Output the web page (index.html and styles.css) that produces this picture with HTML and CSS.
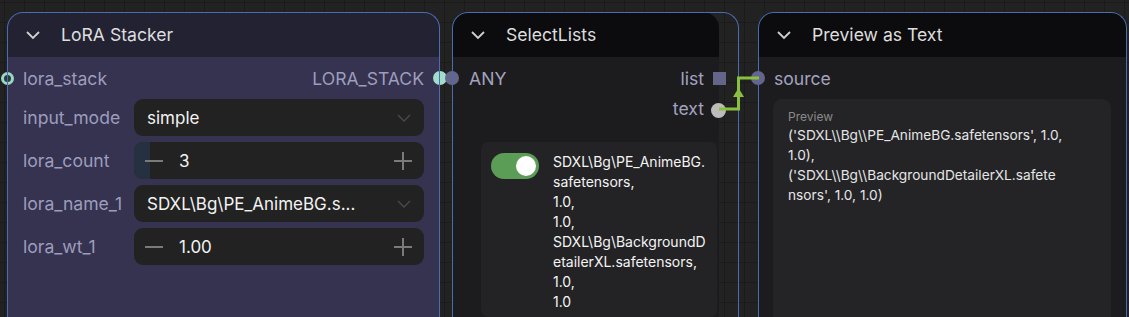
FILE: index.html
```html
<!DOCTYPE html>
<html lang="en">
<head>
<meta charset="UTF-8">
<meta name="viewport" content="width=device-width, initial-scale=1.0">
<title>Node Graph</title>
<link rel="stylesheet" href="styles.css">
</head>
<body>
<div class="canvas">

    <!-- LoRA Stacker -->
    <div class="node node-lora">
        <div class="node-header">
            <svg class="chevron" width="16" height="10" viewBox="0 0 16 10"><path d="M2 2 L8 8 L14 2" fill="none" stroke="#d0d0d0" stroke-width="1.8"/></svg>
            <span class="node-title">LoRA Stacker</span>
        </div>
        <div class="node-body">
            <div class="slot-row">
                <span class="slot-label">lora_stack</span>
                <span class="slot-label">LORA_STACK</span>
                <span class="dot dot-in dot-ring"></span>
                <span class="dot dot-out dot-teal"></span>
            </div>
            <div class="widgets">
                <span class="w-label">input_mode</span>
                <div class="widget">
                    <span class="w-value">simple</span>
                    <svg class="w-arrow" width="14" height="8" viewBox="0 0 14 8"><path d="M1 1 L7 7 L13 1" fill="none" stroke="#4a4a4a" stroke-width="1.4"/></svg>
                </div>

                <span class="w-label">lora_count</span>
                <div class="widget widget-num">
                    <span class="num-fill"></span>
                    <span class="minus"></span>
                    <span class="w-value">3</span>
                    <span class="plus"></span>
                </div>

                <span class="w-label">lora_name_1</span>
                <div class="widget">
                    <span class="w-value">SDXL\Bg\PE_AnimeBG.s...</span>
                    <svg class="w-arrow" width="14" height="8" viewBox="0 0 14 8"><path d="M1 1 L7 7 L13 1" fill="none" stroke="#4a4a4a" stroke-width="1.4"/></svg>
                </div>

                <span class="w-label">lora_wt_1</span>
                <div class="widget widget-num">
                    <span class="minus"></span>
                    <span class="w-value">1.00</span>
                    <span class="plus"></span>
                </div>
            </div>
        </div>
    </div>

    <!-- SelectLists -->
    <div class="node node-select">
        <div class="node-header">
            <svg class="chevron" width="16" height="10" viewBox="0 0 16 10"><path d="M2 2 L8 8 L14 2" fill="none" stroke="#d0d0d0" stroke-width="1.8"/></svg>
            <span class="node-title">SelectLists</span>
        </div>
        <div class="node-body">
            <div class="slot-row">
                <span class="slot-label">ANY</span>
                <span class="slot-label">list</span>
                <span class="dot dot-in dot-slate"></span>
                <span class="dot dot-out dot-square"></span>
            </div>
            <div class="slot-row slot-row-short">
                <span></span>
                <span class="slot-label">text</span>
                <span class="dot dot-out dot-grey"></span>
            </div>
            <div class="list-box">
                <span class="toggle"><span class="knob"></span></span>
                <div class="list-text">SDXL\Bg\PE_AnimeBG.<br>safetensors,<br>1.0,<br>1.0,<br>SDXL\Bg\BackgroundD<br>etailerXL.safetensors,<br>1.0,<br>1.0</div>
            </div>
        </div>
    </div>

    <!-- Preview as Text -->
    <div class="node node-preview">
        <div class="node-header">
            <svg class="chevron" width="16" height="10" viewBox="0 0 16 10"><path d="M2 2 L8 8 L14 2" fill="none" stroke="#d0d0d0" stroke-width="1.8"/></svg>
            <span class="node-title">Preview as Text</span>
        </div>
        <div class="node-body">
            <div class="slot-row">
                <span class="slot-label">source</span>
                <span class="dot dot-in dot-slate"></span>
            </div>
            <div class="preview-box">
                <div class="preview-label">Preview</div>
                <div class="preview-text">('SDXL\\Bg\\PE_AnimeBG.safetensors', 1.0,<br>1.0),<br>('SDXL\\Bg\\BackgroundDetailerXL.safete<br>nsors', 1.0, 1.0)</div>
            </div>
        </div>
    </div>

    <!-- link text -> source -->
    <svg class="link" width="60" height="50" viewBox="710 70 60 50">
        <path d="M719 109 H738.5 V78 H759" fill="none" stroke="#8ac03f" stroke-width="3"/>
        <path d="M733 97 L738.5 88 L744 97 Z" fill="#8ac03f"/>
    </svg>

</div>
</body>
</html>
```

FILE: styles.css
```css
body {
    margin: 0;
    padding: 0;
    font-family: Inter, "Noto Sans", sans-serif;
}
.canvas {
    position: relative;
    width: 1129px;
    height: 317px;
    overflow: hidden;
    background-color: #222222;
    background-image:
        linear-gradient(#1b1b1b 1px, transparent 1px),
        linear-gradient(90deg, #1b1b1b 1px, transparent 1px);
    background-size: 20px 20px;
    background-position: 4px 2px;
}

/* nodes sit on a free canvas */
.node {
    position: absolute;
    top: 12px;
    height: 330px;
    display: flex;
    flex-direction: column;
}
.node::after {
    content: "";
    position: absolute;
    top: 0;
    left: 0;
    right: 0;
    bottom: 0;
    border: 1px solid #4b6db0;
    border-bottom: none;
    border-radius: 16px 16px 0 0;
    pointer-events: none;
}
.node-lora {
    left: 7px;
    width: 433px;
}
.node-select {
    left: 452px;
    width: 267px;
}
.node-select::after {
    right: -20px;
}
.node-preview {
    left: 758px;
    width: 369px;
}

.node-header {
    height: 45px;
    flex: none;
    display: flex;
    align-items: center;
    padding-left: 18px;
    border-radius: 16px 16px 0 0;
    background-color: #0c0c0e;
}
.node-lora .node-header {
    background-color: #222233;
}
.chevron {
    flex: none;
}
.node-title {
    margin-left: 20px;
    font-size: 17.6px;
    color: #dedede;
}

.node-body {
    flex: 1;
    background-color: #1c1c1e;
}
.node-lora .node-body {
    background-color: #353350;
}

.slot-row {
    position: relative;
    height: 42px;
    display: flex;
    justify-content: space-between;
    align-items: center;
    padding: 0 16px;
}
.node-select .slot-row {
    height: 42px;
    padding: 0 15px 0 17px;
}
.node-select .slot-row-short {
    height: 23px;
    align-items: flex-start;
    margin-top: -3px;
    padding-top: 2px;
}
.slot-label {
    font-size: 17.6px;
    color: #9d9dbd;
}
.node-select .slot-label,
.node-preview .slot-label {
    color: #a3a3c0;
}

.dot {
    position: absolute;
    top: 50%;
    width: 14px;
    height: 14px;
    margin-top: -7px;
    border-radius: 50%;
}
.slot-row-short .dot {
    top: 14px;
}
.dot-in {
    left: -7px;
}
.dot-out {
    right: -7px;
}
.dot-ring {
    left: -6px;
    width: 7px;
    height: 7px;
    margin-top: -6px;
    border: 3px solid #9ad8c6;
    background-color: #2a3b3a;
}
.dot-teal {
    background-color: #a2dccb;
}
.dot-slate {
    background-color: #65658a;
}
.dot-square {
    border-radius: 0;
    width: 13px;
    height: 13px;
    margin-top: -6px;
    right: -7px;
    background-color: #65658a;
}
.dot-grey {
    background-color: #bcbcbc;
    width: 15px;
    height: 15px;
}

/* widgets */
.widgets {
    display: grid;
    grid-template-columns: 111px 1fr;
    grid-auto-rows: 37px;
    row-gap: 6px;
    align-items: center;
    padding: 0 16px;
}
.w-label {
    font-size: 17.6px;
    color: #9d9dbd;
    white-space: nowrap;
}
.widget {
    position: relative;
    height: 37px;
    display: flex;
    align-items: center;
    padding: 0 13px;
    border-radius: 9px;
    background-color: #222222;
    overflow: hidden;
}
.w-value {
    flex: 1;
    font-size: 17px;
    color: #f2f2f2;
}
.w-arrow {
    flex: none;
}
.widget-num {
    padding: 0 12px 0 11px;
}
.widget-num .w-value {
    position: relative;
    margin-left: 16px;
}
.num-fill {
    position: absolute;
    left: 0;
    top: 0;
    bottom: 0;
    width: 16px;
    background-color: #253141;
}
.minus,
.plus {
    position: relative;
    width: 18px;
    height: 18px;
    flex: none;
}
.minus::before,
.plus::before,
.plus::after {
    content: "";
    position: absolute;
    background-color: #7a7a7a;
}
.minus::before,
.plus::before {
    left: 0;
    right: 0;
    top: 8px;
    height: 2px;
}
.plus::after {
    top: 0;
    bottom: 0;
    left: 8px;
    width: 2px;
}

/* SelectLists list */
.list-box {
    display: flex;
    align-items: flex-start;
    gap: 14px;
    margin: 21px 2px 0 29px;
    padding: 11px 10px 10px 10px;
    height: 154px;
    border-radius: 7px;
    background-color: #232325;
}
.toggle {
    position: relative;
    flex: none;
    width: 48px;
    height: 26px;
    border-radius: 13px;
    background-color: #5b9d56;
}
.knob {
    position: absolute;
    right: 3px;
    top: 3px;
    width: 20px;
    height: 20px;
    border-radius: 50%;
    background-color: #ffffff;
}
.list-text {
    font-size: 14px;
    line-height: 20px;
    color: #f4f4f4;
    margin-top: -1px;
}

/* Preview */
.preview-box {
    margin: 0 16px 0 15px;
    padding: 10px 15px;
    height: 220px;
    border-radius: 9px;
    background-color: #242426;
}
.preview-label {
    font-size: 12px;
    line-height: 16px;
    color: #8a8a8a;
}
.preview-text {
    font-size: 13.7px;
    line-height: 20px;
    color: #e6e6e6;
}

.link {
    position: absolute;
    left: 710px;
    top: 70px;
}
```
